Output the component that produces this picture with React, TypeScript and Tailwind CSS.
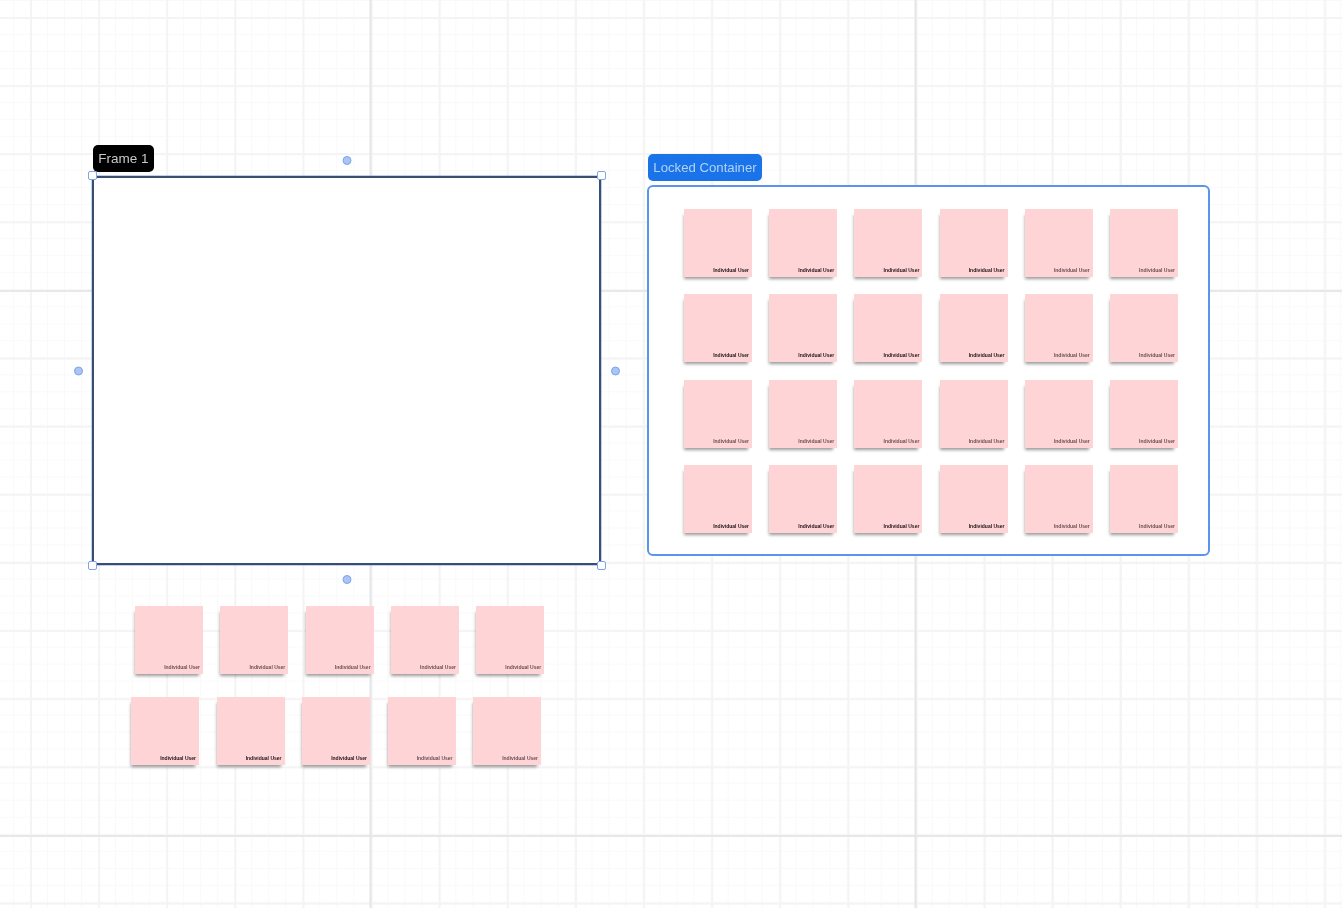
import React from "react";

const Sticky: React.FC<{ faint?: boolean }> = ({ faint }) => (
    <div className="w-[68px] h-[68px] shrink-0 bg-[#ffd4d7] shadow-[-2px_4px_3px_-2px_rgba(0,0,0,0.4)] flex items-end justify-end pr-[3px] pb-[4px]">
        <span
            className={`text-[5px] leading-[6px] whitespace-nowrap font-bold ${
                faint ? "text-[#6a5053]" : "text-[#1f1214]"
            }`}
        >
            Individual User
        </span>
    </div>
);

const Handle: React.FC<{ className: string }> = ({ className }) => (
    <div className={`absolute w-[9px] h-[9px] rounded-[2px] bg-white border border-[#7ea4ec] ${className}`} />
);

const Dot: React.FC<{ className: string }> = ({ className }) => (
    <div className={`absolute w-[9px] h-[9px] rounded-full bg-[#a9c4f5] border border-[#7ea4ec] ${className}`} />
);

const lockedRows = [0, 1, 2, 3];
const lockedCols = [0, 1, 2, 3, 4, 5];
const looseCols = [0, 1, 2, 3, 4];

export default function App() {
    return (
        <div className="relative w-[1342px] h-[908px] overflow-hidden bg-white font-['Liberation_Sans',Arial,sans-serif] blur-[0.6px] bg-[linear-gradient(to_right,#e6e6e6_2px,transparent_2px),linear-gradient(to_bottom,#e8e8e8_2px,transparent_2px),linear-gradient(to_right,#f4f4f4_1.5px,transparent_1.5px),linear-gradient(to_bottom,#f4f4f4_1.5px,transparent_1.5px),linear-gradient(to_right,#f9f9f9_1px,transparent_1px),linear-gradient(to_bottom,#f9f9f9_1px,transparent_1px)] bg-[size:545px_545px,545px_545px,68.125px_68.125px,68.125px_68.125px,17.03px_17.03px,17.03px_17.03px] bg-[position:369.5px_0,0_290px,30px_0,0_17px,13px_0,0_0]">
            {/* frame */}
            <div className="absolute left-[92px] top-[145px] flex flex-col items-start gap-[4px]">
                <div className="ml-[1px] pt-[1px] w-[61px] h-[27px] rounded-[5px] bg-black text-[#c9c9c9] text-[13.5px] flex items-center justify-center">
                    Frame 1
                </div>
                <div className="relative w-[509px] h-[389px] bg-white border-2 border-[#3a4f6e] rounded-[2px] shadow-[0_0_0_1px_rgba(126,164,236,0.5)]">
                    <Handle className="-left-[6px] -top-[7px]" />
                    <Handle className="-right-[7px] -top-[7px]" />
                    <Handle className="-left-[6px] -bottom-[7px]" />
                    <Handle className="-right-[7px] -bottom-[7px]" />
                    <Dot className="left-1/2 -translate-x-1/2 -top-[22px]" />
                    <Dot className="top-1/2 -translate-y-1/2 -left-[20px]" />
                    <Dot className="top-1/2 -translate-y-1/2 -right-[21px]" />
                    <Dot className="left-1/2 -translate-x-1/2 -bottom-[21px]" />
                </div>
            </div>

            {/* locked container */}
            <div className="absolute left-[647px] top-[154px] flex flex-col items-start gap-[4px]">
                <div className="ml-[1px] w-[114px] h-[27px] rounded-[5px] bg-[#1a73e8] text-[#b3d2f8] text-[13.2px] flex items-center justify-center whitespace-nowrap">
                    Locked Container
                </div>
                <div className="w-[563px] h-[371px] bg-white border-2 border-[#5b94ea] rounded-[6px] pl-[35px] pt-[22px]">
                    <div className="grid grid-cols-[repeat(6,68px)] gap-x-[17.2px] gap-y-[17.3px]">
                        {lockedRows.map((row) =>
                            lockedCols.map((col) => (
                                <Sticky key={`${row}-${col}`} faint={col >= 4 || row === 2} />
                            ))
                        )}
                    </div>
                </div>
            </div>

            {/* loose stickies */}
            <div className="absolute left-[131px] top-[606px] flex flex-col gap-[23px]">
                <div className="ml-[4px] flex gap-[17.3px]">
                    {looseCols.map((col) => (
                        <Sticky key={col} faint />
                    ))}
                </div>
                <div className="flex gap-[17.5px]">
                    {looseCols.map((col) => (
                        <Sticky key={col} faint={col >= 3} />
                    ))}
                </div>
            </div>
        </div>
    );
}
